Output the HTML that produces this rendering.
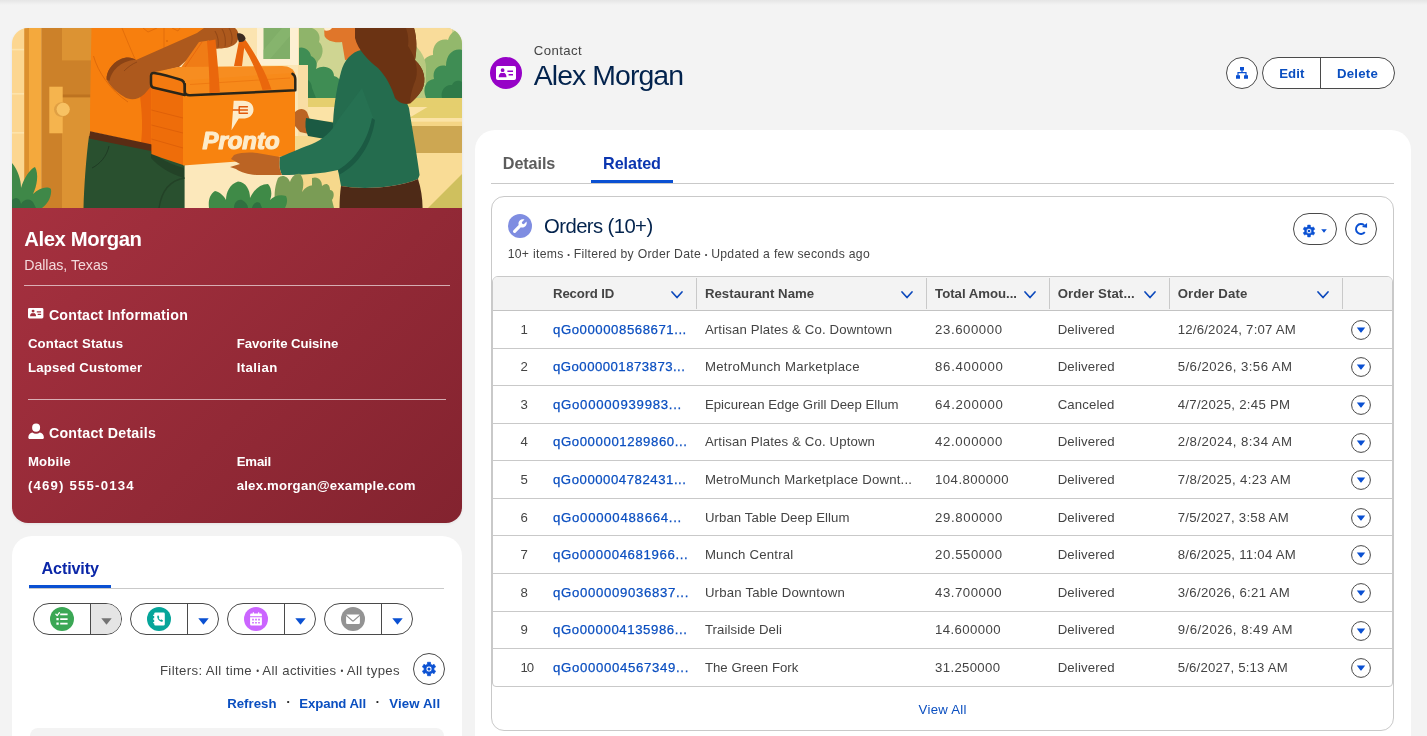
<!DOCTYPE html>
<html lang="en"><head><meta charset="utf-8"><title>Alex Morgan | Contact</title>
<style>
html,body{margin:0;padding:0}
html{background:#f3f3f3}
body{width:1427px;height:736px;overflow:hidden;background:#f3f3f3;font-family:"Liberation Sans",sans-serif;position:relative;color:#444;will-change:transform}
.a{position:absolute}
.t{position:absolute;white-space:nowrap;line-height:1;color:#444;font-weight:400;text-decoration:none}
svg{position:absolute;overflow:visible}
.illu{overflow:hidden}
.card{position:absolute;background:#fff}
.btn{position:absolute;box-sizing:border-box;border:1px solid #4a4a4a;background:#fff}
.hr{position:absolute;height:1px}
.illu{left:0;top:0}
</style></head><body>
<div class="a" style="left:0;top:0;width:1427px;height:4.5px;background:linear-gradient(#e5e5e5,#f3f3f3)"></div>
<div class="a" style="left:12px;top:28px;width:450px;height:495px;border-radius:16px;overflow:hidden;box-shadow:0 1px 3px rgba(0,0,0,.07)">
<div class="a" style="left:0;top:178px;width:450px;height:318px;background:linear-gradient(135deg,#ae3443 0%,#83232f 100%) 0 -178px/450px 495px no-repeat"></div>
<svg class="illu" viewBox="0 0 450 180" width="450" height="180">
<g>
<!-- base -->
<rect width="450" height="180" fill="#fce8bb"/>
<!-- garden right -->
<rect x="286" y="0" width="164" height="72" fill="#cfd592"/>
<rect x="286" y="69.5" width="164" height="10" fill="#e5cf6e"/>
<rect x="286" y="79" width="164" height="14.5" fill="#fbe3a6"/>
<rect x="286" y="93.5" width="164" height="5" fill="#f5d585"/>
<rect x="395" y="98" width="55" height="27" fill="#cda752"/>
<rect x="296" y="93.5" width="50" height="30" fill="#efd27a"/><rect x="283" y="108" width="63" height="72" fill="#f6d88c"/>
<rect x="395" y="125" width="55" height="55" fill="#f9dc96"/>
<path d="M416 180 L450 146 V180 Z" fill="#cfc05e"/>
<path d="M416 78.8 H450 V90 H397 Z" fill="#e5cf6e"/>
<rect x="400" y="0" width="40" height="42" fill="#f9dc9a"/>
<!-- light bushes -->
<path d="M286 0 H300 C306 2 309 8 307 14 C312 18 312 28 306 33 C304 40 296 42 290 40 L286 42 Z" fill="#8fb46a"/>
<path d="M404 70 C398 60 402 50 410 48 C406 38 412 28 421 27 C420 16 428 10 436 12 C438 4 446 0 450 2 V70 Z" fill="#93b86c"/>
<path d="M396 70 C392 52 394 30 402 16 C408 22 414 30 414 40 L414 70 Z" fill="#b9c980"/>
<!-- dark bushes -->
<path d="M286 20 C292 18 298 22 299 28 C304 30 306 36 304 41 C312 36 322 40 322 48 C330 50 332 60 327 66 L327 70 H286 Z" fill="#3f8d54"/>
<path d="M286 50 C294 48 300 54 300 60 L304 70 H286 Z" fill="#2f7a48"/>
<path d="M414 70 C410 60 414 52 422 51 C420 42 426 36 434 38 C434 26 442 20 450 22 V70 Z" fill="#3f8d54"/>
<path d="M430 70 C428 62 434 56 440 57 C442 52 447 52 450 54 V70 Z" fill="#2f7a48"/>
<!-- wall + window -->
<rect x="225" y="0" width="62" height="72" fill="#fbe4b0"/>
<rect x="245" y="0" width="41" height="37" fill="#fdf0d2"/>
<rect x="251.5" y="0" width="26.5" height="31" fill="#80ae68"/>
<path d="M251.5 22 L270 0 H278 V8 L258 31 H251.5 Z" fill="#8ab872" opacity=".6"/>
<rect x="276" y="37" width="20" height="71" fill="#fbe6b6"/><rect x="286" y="37" width="10" height="71" fill="#f9dea4"/>
<!-- left wall -->
<rect x="0" y="0" width="12.4" height="180" fill="#fcd690"/>
<rect x="0" y="20.8" width="12.4" height="1.6" fill="#fde3ab"/>
<rect x="0" y="65" width="12.4" height="1.6" fill="#fde3ab"/>
<rect x="0" y="104" width="12.4" height="1.6" fill="#fde3ab"/>
<!-- door -->
<rect x="12.2" y="0" width="5" height="180" fill="#dc902e"/>
<rect x="17" y="0" width="12.5" height="180" fill="#f4a93d"/>
<rect x="29.3" y="0" width="52" height="180" fill="#cc8129"/>
<rect x="50" y="0" width="30" height="32.4" fill="#dc9333"/>
<rect x="50" y="66.5" width="30" height="3" fill="#bd7320"/>
<rect x="50" y="69.5" width="30" height="111" fill="#dc9333"/>
<rect x="37.3" y="58.7" width="13.4" height="46.6" fill="#f5b44e"/>
<circle cx="49.3" cy="81.6" r="7.3" fill="#e0a044"/>
<circle cx="51.2" cy="81.3" r="6.6" fill="#f8c263"/>

<!-- ===== man ===== -->
<!-- pants -->
<path d="M77 108 L140 121 L152 128 L172.6 136 V180 H71.5 C72 160 74 130 77 108 Z" fill="#29502f"/>
<path d="M139 123 C146 130 158 136 172 140 V150 C158 146 146 138 139 130 Z" fill="#234227"/>
<path d="M97 118 C95 128 88 136 80 140" stroke="#1f3b24" stroke-width="1" fill="none"/>
<path d="M172.6 150 C160 152 150 160 147 180" stroke="#234227" stroke-width="1.4" fill="none"/>
<!-- shirt -->
<path d="M79.5 0 H198 L190 14 L162 36 L150 44 V120 L139 117 L78 103.5 C78 70 79 30 79.5 0 Z" fill="#f77f0e"/>
<path d="M128 68 L139.4 58 V117 L129 115 C131 100 130 84 128 68 Z" fill="#ea650a"/>
<path d="M110 0 C114 10 119 22 123 31" stroke="#de6a0a" stroke-width=".8" fill="none"/>
<path d="M81.5 28 C86 44 98 62 116 74" stroke="#de6a0a" stroke-width="1" fill="none"/>
<path d="M152 0 V20" stroke="#de6a0a" stroke-width=".8" fill="none"/>
<path d="M131 0 L136 4 L145 0 M160 0 L166 3 L168 0" stroke="#de6a0a" stroke-width=".8" fill="none"/>
<circle cx="155" cy="13" r="1" fill="#de6a0a"/>
<!-- belt -->
<path d="M78.2 103.2 L139 116.2 L150 119 V127 L139 123 L77 110.6 Z" fill="#5a2c14"/>
<!-- arm -->
<path d="M94.6 51.5 C94 44 100 35 108 31.5 C114 28.6 120 29 124 32 L185 5 L192 0 H223 C227 3 227.5 9 225 14 C222 18.5 214 20.5 207 20.5 C202 21.5 197 20 194.5 16 L185 23 L167 39 L141 45.5 L139.8 57.5 L132.5 66 C126 72 118 73 111.7 68.5 C104 64 98 58 94.6 51.5 Z" fill="#ad591d"/>
<path d="M94.6 51.5 C94 44 100 35 108 31.5 C114 28.6 120 29 124 32 C112 32 100 40 97.5 53 Z" fill="#8a4315"/>
<path d="M112 43 C116 39 120 36 125 34" stroke="#8a4315" stroke-width=".8" fill="none"/>
<path d="M203 3 C206 8 207 14 206 19.5 M210 1 C213 6 214 12 213 18.5 M217 0 C220 5 221 11 219 16.5" stroke="#8a4315" stroke-width=".8" fill="none"/>
<!-- ===== bag ===== -->
<!-- back straps -->
<path d="M187 14 L197 12.5 L199 39 L169 39.5 Z" fill="#f07c16"/><path d="M190 14 L173 39" stroke="#e8690e" stroke-width="1" fill="none"/>
<path d="M227 13 L233 13 L230 38 L222 38 Z" fill="#e8640c"/>
<!-- lid top -->
<path d="M141 44.5 L166 39 L270 38 C277 38 282 41 283 46 L173 54 Z" fill="#f78d20"/>
<!-- side face -->
<path d="M139.4 58 L171 66 V137 L150 130 L139.4 126 Z" fill="#ee6d0a"/>
<path d="M139.4 82 L171 90 M139.4 97 L171 105 M139.4 111 L171 120" stroke="#dd5f08" stroke-width=".9" fill="none"/>
<!-- front face -->
<path d="M171 64 L283 60 V127 L232 133 L171 137.5 Z" fill="#f8830f"/>
<!-- lid side -->
<path d="M142 45 C148 46 160 49 168 51.5 C171.5 52.5 172.8 55 172.8 58 V67 L141 59.5 C139 59 139 57 139 55 V48 C139 46 140 44.7 142 45 Z" fill="#f47a10" stroke="#2b2619" stroke-width="2.5" stroke-linejoin="round"/>
<!-- lid front -->
<path d="M172.8 56 C172.8 53 174 52.2 177 52 L277 45.2 C281 45 283.2 47 283.3 51 V62.3 L178 67.3 C174.5 67.4 172.8 66 172.8 63 Z" fill="#f78a1a"/>
<path d="M172.8 56 V63 C172.8 66 174.5 67.4 178 67.3 L283.3 62.3 V51 C283.2 48 282 46.5 280.5 45.8" stroke="#2b2619" stroke-width="2.5" fill="none" stroke-linejoin="round" stroke-linecap="round"/>
<path d="M178 56.5 L278 50" stroke="#ee7a12" stroke-width="1" fill="none"/>
<!-- front straps -->
<path d="M195 13 L203.5 11.5 C205 30 207 48 207.8 64.5 L197.5 65 C197.5 48 196.5 30 195 13 Z" fill="#ea670c"/>
<path d="M233.5 12 C242 24 254 44 259.5 61.5 L250.5 62 C246 46 238 28 229 15 Z" fill="#ea670c"/>
<!-- grip -->
<path d="M225 5.5 C229 4.5 233 7 233.5 10.5 C233.5 13 231 14.5 227 14 C225.5 11 225 8 225 5.5 Z" fill="#3b2a20"/>
<!-- logo -->
<g fill="#fdeccb" transform="translate(230.5 82) scale(1.1) translate(-231 -82)">
<path d="M223 73.5 H231.5 C237.5 73.5 241 77 241 81.5 C241 86.5 237 89.8 231 89.8 H227.6 L221 100.5 Z"/>
</g>
<g stroke="#e25a0c" stroke-width="1.25" fill="none" stroke-linecap="round" transform="translate(230.5 82) scale(1.1) translate(-231 -82)"><path d="M222.5 82 H228 M228 79 H235.5 M228 82 H235.5 M228 85 H235.5 M228 79 V85"/></g>
<text x="190.5" y="120.8" font-family="'Liberation Sans',sans-serif" font-weight="700" font-style="italic" font-size="23" fill="#fdeccb" stroke="#fdeccb" stroke-width="1.2" stroke-linejoin="round" textLength="77" lengthAdjust="spacingAndGlyphs">Pronto</text>
<!-- ===== woman ===== -->
<!-- far arm (shadow) + hand on bag -->
<path d="M283 84 C287 80 292 80 295 84 L298 92 L297 106 L288 104 L283 98 Z" fill="#bb6424"/>
<path d="M294 90 L330 96 V114 L296 108 C293 102 293 96 294 90 Z" fill="#1b5a43"/>
<!-- neck/face -->
<path d="M312 0 H345 L352 30 L333 32 L330 14 C322 15 315 13 312.5 8 Z" fill="#e0762a"/>
<path d="M312 0 H320 C319 2 316 3 312.5 2.5 Z" fill="#fdf0d2"/>
<!-- sweater body -->
<path d="M349 22 C340 24 332 32 329 44 C324 62 321 84 321 100 L326 142 L329 158 C350 162 385 160 406 151 L407.6 147 C404 120 400 100 397 80 L380 40 Z" fill="#246c4e"/>
<!-- skirt -->
<path d="M329 158 C350 162 385 160 406 151 C409 160 410.5 170 410.6 180 H327.5 C327.6 172 328 165 329 158 Z" fill="#4e2a17"/>
<!-- near arm -->
<path d="M268 129 C280 124 292 119 300 116 C310 112 320 104 326 92 L350 60 L362 92 C358 112 346 132 326 142 C310 146 288 147 270 147 C267 141 267 134 268 129 Z" fill="#267152"/>
<path d="M360 90 C356 110 346 130 326 142 L327.5 146.5 C348 136 360 114 363 92 Z" fill="#1b5a43"/>
<!-- near hand -->
<path d="M222 127 C230 124 240 124 248 125.5 L268 129 C267 135 267 141 270 147 L250 147 C240 147.5 230 145 224 141 L218 139 L228 136 L219 131 Z" fill="#bb6424"/>
<!-- hair -->
<path d="M343 0 H402 C405 10 405 22 403 32 C412 40 415 52 410 62 C406 68 402 72 398 75.5 C392 77 386 74 383 70 C380 60 374 48 366 40 C356 32 346 22 343 10 Z" fill="#6b3313"/>
<path d="M396 18 C404 30 408 44 402 56 C400 62 398 68 398 75.5 C402 72 406 68 410 62 C415 52 412 40 403 32 C405 22 405 10 402 0 H394 C396 6 397 12 396 18 Z" fill="#7c3f19"/>
<!-- bushes bottom -->
<path d="M263.7 180 C262 170 262 160 266 150 C270 146 276 148 278 154 C280 148 284 145 288 146 C292 150 292 158 290 164 C294 158 300 156 304 158 C308 164 306 174 300 180 Z" fill="#7a9c55"/>
<path d="M300 180 V150 C306 148 310 152 310 158 C314 154 318 156 318 162 C322 162 323 168 320 172 L322 180 Z" fill="#7a9c55"/>
<path d="M197 180 C196 172 198 166 203 163 C208 164 212 168 214 172 C214 164 218 156 226 153.5 C234 154 238 162 238 170 C242 162 248 156 256 156 C260 160 260 168 258 172 C262 168 268 166 274 168 C276 172 275 176 273 180 Z" fill="#3f8a47"/>
<path d="M222 180 C222 174 226 171 230 172 C234 174 236 177 236 180 Z M240 180 C241 175 245 173 248 175 L250 180 Z" fill="#2f7040"/>
<!-- bush bottom-left -->
<path d="M0 135 C6 142 9 152 9 160 C12 150 18 141 23 139 C27 146 25 158 21 166 C27 160 35 158 39 161 C40 168 36 176 30 180 H0 Z" fill="#3f8848"/>
<path d="M0 172 C4 168 8 170 9 176 C12 170 20 170 22 176 L24 180 H0 Z" fill="#2f7040"/>
</g>
</svg>
</div>
<div class="t" style="left:24.2px;top:229px;font-size:20.3px;font-weight:700;color:#fff;letter-spacing:-0.39px;">Alex Morgan</div>
<div class="t" style="left:24.2px;top:258px;font-size:14.2px;color:#f3d9dc;letter-spacing:-0.04px;">Dallas, Texas</div>
<div class="hr" style="left:24px;top:285px;width:426px;background:rgba(255,255,255,.62)"></div>
<svg style="left:28.2px;top:307.8px" width="15.4" height="10.4" viewBox="6 9.1 20 13.9" preserveAspectRatio="none"><path fill="#fff" fill-rule="evenodd" d="M7.8 9.1H24.2A1.8 1.8 0 0 1 26 10.9V21.2A1.8 1.8 0 0 1 24.2 23H7.8A1.8 1.8 0 0 1 6 21.2V10.9A1.8 1.8 0 0 1 7.8 9.1ZM12.6 11.3A1.9 1.9 0 1 0 12.6 15.1A1.9 1.9 0 1 0 12.6 11.3ZM8.7 20.2H16.5C16.5 17.6 15.3 16.1 14 15.7C13.2 16.2 12 16.2 11.2 15.7C9.9 16.1 8.7 17.6 8.7 20.2ZM17.4 13.5V15.1H23V13.5ZM18.6 16.9V18.5H23V16.9Z"/></svg>
<div class="t" style="left:48.9px;top:308px;font-size:14.2px;font-weight:700;color:#fff;letter-spacing:0.23px;">Contact Information</div>
<div class="t" style="left:27.9px;top:337px;font-size:13.2px;font-weight:700;color:#fff;letter-spacing:0.17px;">Contact Status</div>
<div class="t" style="left:236.7px;top:337px;font-size:13.2px;font-weight:700;color:#fff;letter-spacing:-0.07px;">Favorite Cuisine</div>
<div class="t" style="left:27.9px;top:361px;font-size:13.2px;font-weight:700;color:#fff;letter-spacing:0.21px;">Lapsed Customer</div>
<div class="t" style="left:236.7px;top:361px;font-size:13.2px;font-weight:700;color:#fff;letter-spacing:0.40px;">Italian</div>
<div class="hr" style="left:28px;top:399px;width:418px;background:rgba(255,255,255,.62)"></div>
<svg style="left:28px;top:423px" width="16" height="16" viewBox="0 0 16 16"><path fill="#fff" d="M8.1.6A4 4.1 0 1 0 8.1 8.8A4 4.1 0 1 0 8.1.6ZM.3 14.4C.3 11.6 2.3 9.9 4.4 9.6C5.4 10.4 6.7 10.8 8.1 10.8C9.5 10.8 10.8 10.4 11.8 9.6C13.9 9.9 15.9 11.6 15.9 14.4C15.9 15.3 15.3 15.9 14.6 15.9H1.6C.9 15.9.3 15.3.3 14.4Z"/></svg>
<div class="t" style="left:48.9px;top:426px;font-size:14.2px;font-weight:700;color:#fff;letter-spacing:0.26px;">Contact Details</div>
<div class="t" style="left:27.9px;top:455px;font-size:13.2px;font-weight:700;color:#fff;letter-spacing:0.21px;">Mobile</div>
<div class="t" style="left:236.7px;top:455px;font-size:13.2px;font-weight:700;color:#fff;letter-spacing:-0.15px;">Email</div>
<div class="t" style="left:27.9px;top:479px;font-size:13.2px;font-weight:700;color:#fff;letter-spacing:1.19px;">(469) 555-0134</div>
<div class="t" style="left:236.7px;top:479px;font-size:13.2px;font-weight:700;color:#fff;letter-spacing:0.21px;">alex.morgan@example.com</div>
<div class="card" style="left:12px;top:536px;width:450px;height:220px;border-radius:20px"></div>
<div class="t" style="left:41.5px;top:560px;font-size:16.2px;font-weight:700;color:#0b27a8;letter-spacing:-0.15px;">Activity</div>
<div class="hr" style="left:29px;top:588px;width:415px;background:#c9c9c9"></div>
<div class="a" style="left:29px;top:585px;width:82px;height:3.4px;background:#0a50d2"></div>
<div class="btn" style="left:33px;top:603px;width:89px;height:32px;border-radius:16px;overflow:hidden"><div class="a" style="left:55.8px;top:0;width:1px;height:30px;background:#4a4a4a"></div><div class="a" style="left:56.8px;top:0;width:32px;height:30px;background:#e5e5e5"></div></div>
<svg style="left:50px;top:607px" width="24" height="24" viewBox="0 0 24 24"><circle cx="12" cy="12" r="12" fill="#3ba755"/><path fill="#fff" d="M10.2 6.6H17.6V8.3H10.2ZM10.2 11.2H17.6V12.9H10.2ZM10.2 15.7H17.6V17.4H10.2ZM6.4 10.9H8.7V13.2H6.4ZM6.4 15.4H8.7V17.7H6.4Z"/><path d="M5.9 7.3L7.2 8.6L9.4 5.7" stroke="#fff" stroke-width="1.3" fill="none" stroke-linecap="round" stroke-linejoin="round"/></svg>
<svg style="left:100.5px;top:617.8px" width="11" height="7" viewBox="0 0 11 7"><path fill="#747474" d="M.3.3H10.7L5.9 6.3Q5.5 6.7 5.1 6.3Z"/></svg>
<div class="btn" style="left:130px;top:603px;width:89px;height:32px;border-radius:16px;overflow:hidden"><div class="a" style="left:55.8px;top:0;width:1px;height:30px;background:#4a4a4a"></div></div>
<svg style="left:147px;top:607px" width="24" height="24" viewBox="0 0 24 24"><circle cx="12" cy="12" r="12" fill="#06a59a"/><path fill="#fff" fill-rule="evenodd" d="M8.6 5.4H16.4A1.4 1.4 0 0 1 17.8 6.8V17.2A1.4 1.4 0 0 1 16.4 18.6H8.6A1.4 1.4 0 0 1 7.2 17.2V16.3H6.2V14.9H7.2V12.7H6.2V11.3H7.2V9.1H6.2V7.7H7.2V6.8A1.4 1.4 0 0 1 8.6 5.4ZM10.9 8.6C10.4 8.9 10.1 9.4 10.2 10C10.5 12.2 12.2 14.2 14.3 14.8C14.9 15 15.4 14.7 15.7 14.3L15.9 13.9C16 13.7 15.9 13.4 15.7 13.3L14.5 12.6C14.3 12.5 14.1 12.5 13.9 12.7L13.5 13.1C12.7 12.7 12 11.9 11.7 11.1L12.1 10.7C12.3 10.5 12.3 10.3 12.2 10.1L11.6 8.8C11.5 8.6 11.2 8.5 10.9 8.6Z"/></svg>
<svg style="left:197.5px;top:617.8px" width="11" height="7" viewBox="0 0 11 7"><path fill="#0a50d2" d="M.3.3H10.7L5.9 6.3Q5.5 6.7 5.1 6.3Z"/></svg>
<div class="btn" style="left:227px;top:603px;width:89px;height:32px;border-radius:16px;overflow:hidden"><div class="a" style="left:55.8px;top:0;width:1px;height:30px;background:#4a4a4a"></div></div>
<svg style="left:244px;top:607px" width="24" height="24" viewBox="0 0 24 24"><circle cx="12" cy="12" r="12" fill="#cb65ff"/><path fill="#fff" fill-rule="evenodd" d="M8.8 5.3H9.9V6.6H14.1V5.3H15.2V6.6H16.6A1.3 1.3 0 0 1 17.9 7.9V9.3H6.1V7.9A1.3 1.3 0 0 1 7.4 6.6H8.8ZM6.1 10.3H17.9V17.2A1.3 1.3 0 0 1 16.6 18.5H7.4A1.3 1.3 0 0 1 6.1 17.2ZM8.2 11.8V13.4H9.8V11.8ZM11.2 11.8V13.4H12.8V11.8ZM14.2 11.8V13.4H15.8V11.8ZM8.2 14.9V16.5H9.8V14.9ZM11.2 14.9V16.5H12.8V14.9ZM14.2 14.9V16.5H15.8V14.9Z"/></svg>
<svg style="left:294.5px;top:617.8px" width="11" height="7" viewBox="0 0 11 7"><path fill="#0a50d2" d="M.3.3H10.7L5.9 6.3Q5.5 6.7 5.1 6.3Z"/></svg>
<div class="btn" style="left:324px;top:603px;width:89px;height:32px;border-radius:16px;overflow:hidden"><div class="a" style="left:55.8px;top:0;width:1px;height:30px;background:#4a4a4a"></div></div>
<svg style="left:341px;top:607px" width="24" height="24" viewBox="0 0 24 24"><circle cx="12" cy="12" r="12" fill="#939393"/><path fill="#fff" d="M6 7.4H18A.9.9 0 0 1 18.6 7.7L12.5 13.1Q12 13.5 11.5 13.1L5.4 7.7A.9.9 0 0 1 6 7.4ZM5.1 9.1L11 14.3Q12 15.1 13 14.3L18.9 9.1V15.8A1.2 1.2 0 0 1 17.7 17H6.3A1.2 1.2 0 0 1 5.1 15.8Z"/></svg>
<svg style="left:391.5px;top:617.8px" width="11" height="7" viewBox="0 0 11 7"><path fill="#0a50d2" d="M.3.3H10.7L5.9 6.3Q5.5 6.7 5.1 6.3Z"/></svg>
<div class="t" style="left:159.9px;top:664px;font-size:13.2px;letter-spacing:0.38px;">Filters: All time <span style="font-size:.62em;vertical-align:.12em;letter-spacing:0">•</span> All activities <span style="font-size:.62em;vertical-align:.12em;letter-spacing:0">•</span> All types</div>
<div class="btn" style="left:413px;top:653px;width:32px;height:32px;border-radius:16px"></div>
<svg style="left:421px;top:661px" width="16" height="16" viewBox="0 0 16 16"><path fill="#0a50d2" fill-rule="evenodd" stroke="#0a50d2" stroke-width=".7" stroke-linejoin="round" d="M6.49 1.27L9.51 1.27L9.59 3.26L11.31 4.25L13.08 3.33L14.58 5.94L12.90 7.01L12.90 8.99L14.58 10.06L13.08 12.67L11.31 11.75L9.59 12.74L9.51 14.73L6.49 14.73L6.41 12.74L4.69 11.75L2.92 12.67L1.42 10.06L3.10 8.99L3.10 7.01L1.42 5.94L2.92 3.33L4.69 4.25L6.41 3.26ZM8 5A3 3 0 1 0 8 11A3 3 0 1 0 8 5Z"/><circle cx="8" cy="8" r="1.55" fill="#0a50d2"/></svg>
<div class="t" style="left:227.2px;top:697px;font-size:13.2px;font-weight:700;color:#0b4fc0;letter-spacing:0.03px;">Refresh</div>
<div class="t" style="left:286.7px;top:698px;font-size:8.1px;color:#222;">•</div>
<div class="t" style="left:299.3px;top:697px;font-size:13.2px;font-weight:700;color:#0b4fc0;letter-spacing:-0.10px;">Expand All</div>
<div class="t" style="left:376.1px;top:698px;font-size:8.1px;color:#222;">•</div>
<div class="t" style="left:389.2px;top:697px;font-size:13.2px;font-weight:700;color:#0b4fc0;letter-spacing:0.15px;">View All</div>
<div class="a" style="left:30px;top:728px;width:414px;height:20px;border-radius:8px;background:#f3f3f3"></div>
<svg style="left:490px;top:57px" width="32" height="32" viewBox="0 0 32 32"><circle cx="16" cy="16" r="16" fill="#9602c7"/><path fill="#fff" fill-rule="evenodd" d="M7.8 9.1H24.2A1.8 1.8 0 0 1 26 10.9V21.2A1.8 1.8 0 0 1 24.2 23H7.8A1.8 1.8 0 0 1 6 21.2V10.9A1.8 1.8 0 0 1 7.8 9.1ZM12.6 11.3A1.9 1.9 0 1 0 12.6 15.1A1.9 1.9 0 1 0 12.6 11.3ZM8.7 20.2H16.5C16.5 17.6 15.3 16.1 14 15.7C13.2 16.2 12 16.2 11.2 15.7C9.9 16.1 8.7 17.6 8.7 20.2ZM17.4 13.5V15.1H23V13.5ZM18.6 16.9V18.5H23V16.9Z"/></svg>
<div class="t" style="left:533.8px;top:44px;font-size:13.2px;letter-spacing:0.42px;">Contact</div>
<h1 class="t" style="left:533.8px;top:61px;font-size:28.4px;color:#03234d;letter-spacing:-0.92px;margin:0;">Alex Morgan</h1>
<div class="btn" style="left:1226px;top:57px;width:32px;height:32px;border-radius:16px"></div>
<svg style="left:1236px;top:67px" width="12" height="12" viewBox="0 0 12 12"><path fill="#0a50d2" d="M4 0H8V3.4H6.6V5.1H10.6V8.3H12V11.8H8V8.3H9.4V6.3H2.6V8.3H4V11.8H0V8.3H1.4V5.1H5.4V3.4H4Z"/></svg>
<div class="btn" style="left:1262px;top:57px;width:133px;height:32px;border-radius:16px"><div class="a" style="left:57px;top:0;width:1px;height:30px;background:#4a4a4a"></div></div>
<div class="t" style="left:1279.2px;top:67px;font-size:13.2px;font-weight:700;color:#0b4fc0;letter-spacing:0.06px;">Edit</div>
<div class="t" style="left:1337.0px;top:67px;font-size:13.2px;font-weight:700;color:#0b4fc0;letter-spacing:0.24px;">Delete</div>
<div class="card" style="left:475px;top:130px;width:936px;height:640px;border-radius:20px"></div>
<div class="t" style="left:502.8px;top:155px;font-size:16.2px;font-weight:700;color:#5c5c5c;letter-spacing:-0.10px;">Details</div>
<div class="t" style="left:603.1px;top:155px;font-size:16.2px;font-weight:700;color:#0b36b0;letter-spacing:-0.10px;">Related</div>
<div class="hr" style="left:491px;top:183px;width:903px;background:#c9c9c9"></div>
<div class="a" style="left:591px;top:180px;width:82px;height:3.4px;background:#0a50d2"></div>
<div class="a" style="left:491px;top:196px;width:903px;height:535px;box-sizing:border-box;border:1px solid #c9c9c9;border-radius:13px"></div>
<svg style="left:507.9px;top:214.1px" width="24" height="24" viewBox="0 0 24 24"><circle cx="12" cy="12" r="12" fill="#7f8de1"/><path fill="#fff" transform="translate(12 12) scale(1.12) translate(-12.1 -11.9)" d="M17.9 7.9C18.4 9.4 18 11 16.9 12.1C15.8 13.2 14.300000000000001 13.5 12.9 13.100000000000001L8.3 17.7C7.7 18.3 6.8 18.3 6.3 17.7C5.7 17.2 5.7 16.3 6.3 15.7L10.9 11.100000000000001C10.5 9.700000000000001 10.8 8.200000000000001 11.9 7.100000000000001C13 6 14.600000000000001 5.6000000000000005 16.1 6.1000000000000005L13.7 8.5L14.1 9.9L15.5 10.3Z"/></svg>
<h2 class="t" style="left:544.1px;top:216px;font-size:20.3px;color:#03234d;letter-spacing:-0.59px;margin:0;">Orders (10+)</h2>
<div class="t" style="left:507.7px;top:248px;font-size:12.2px;letter-spacing:0.31px;">10+ items <span style="font-size:.62em;vertical-align:.12em;letter-spacing:0">•</span> Filtered by Order Date <span style="font-size:.62em;vertical-align:.12em;letter-spacing:0">•</span> Updated a few seconds ago</div>
<div class="btn" style="left:1293px;top:213px;width:44px;height:32px;border-radius:16px"></div>
<svg style="left:1302.1px;top:223.9px" width="14" height="14" viewBox="0 0 16 16"><path fill="#0a50d2" fill-rule="evenodd" stroke="#0a50d2" stroke-width=".7" stroke-linejoin="round" d="M6.49 1.27L9.51 1.27L9.59 3.26L11.31 4.25L13.08 3.33L14.58 5.94L12.90 7.01L12.90 8.99L14.58 10.06L13.08 12.67L11.31 11.75L9.59 12.74L9.51 14.73L6.49 14.73L6.41 12.74L4.69 11.75L2.92 12.67L1.42 10.06L3.10 8.99L3.10 7.01L1.42 5.94L2.92 3.33L4.69 4.25L6.41 3.26ZM8 5A3 3 0 1 0 8 11A3 3 0 1 0 8 5Z"/><circle cx="8" cy="8" r="1.55" fill="#0a50d2"/></svg>
<svg style="left:1320.8px;top:229.1px" width="6" height="4" viewBox="0 0 6 4"><path fill="#0a50d2" d="M.2.3H5.8L3 3.7Z"/></svg>
<div class="btn" style="left:1345px;top:213px;width:32px;height:32px;border-radius:16px"></div>
<svg style="left:1353.8px;top:222.4px" width="14" height="14" viewBox="-7 -7 14 14"><path d="M3.2 -3.8A5 5 0 1 0 3.8 3.2" stroke="#0a50d2" stroke-width="1.9" fill="none"/><path fill="#0a50d2" d="M.9 -1.9L6.05 -6.05V-1.2Z"/></svg>
<div class="a" style="left:492px;top:276px;width:901px;height:411px;box-sizing:border-box;border:1px solid #c9c9c9;border-radius:6px 6px 4px 4px;overflow:hidden;background:#fff"><div class="a" style="left:0;top:0;width:100%;height:33px;background:#f3f3f3;border-bottom:1.6px solid #c3c3c3"></div><div class="a" style="left:203.0px;top:1px;width:1px;height:31px;background:#c9c9c9"></div><div class="a" style="left:433.0px;top:1px;width:1px;height:31px;background:#c9c9c9"></div><div class="a" style="left:556.1px;top:1px;width:1px;height:31px;background:#c9c9c9"></div><div class="a" style="left:676.0px;top:1px;width:1px;height:31px;background:#c9c9c9"></div><div class="a" style="left:849.1px;top:1px;width:1px;height:31px;background:#c9c9c9"></div><div class="a" style="left:0;top:71.0px;width:100%;height:1px;background:#c9c9c9"></div><div class="a" style="left:0;top:108.0px;width:100%;height:1px;background:#c9c9c9"></div><div class="a" style="left:0;top:146.0px;width:100%;height:1px;background:#c9c9c9"></div><div class="a" style="left:0;top:183.0px;width:100%;height:1px;background:#c9c9c9"></div><div class="a" style="left:0;top:221.0px;width:100%;height:1px;background:#c9c9c9"></div><div class="a" style="left:0;top:258.0px;width:100%;height:1px;background:#c9c9c9"></div><div class="a" style="left:0;top:296.0px;width:100%;height:1px;background:#c9c9c9"></div><div class="a" style="left:0;top:334.0px;width:100%;height:1px;background:#c9c9c9"></div><div class="a" style="left:0;top:371.0px;width:100%;height:1px;background:#c9c9c9"></div></div>
<div class="t" style="left:553.0px;top:287px;font-size:13.2px;font-weight:700;letter-spacing:-0.12px;">Record ID</div>
<svg style="left:671px;top:290.6px" width="12" height="8" viewBox="0 0 12 8"><path d="M1 1L6 6.5L11 1" stroke="#0b48bc" stroke-width="1.7" fill="none" stroke-linecap="round" stroke-linejoin="round"/></svg>
<div class="t" style="left:704.9px;top:287px;font-size:13.2px;font-weight:700;letter-spacing:0.06px;">Restaurant Name</div>
<svg style="left:901.2px;top:290.6px" width="12" height="8" viewBox="0 0 12 8"><path d="M1 1L6 6.5L11 1" stroke="#0b48bc" stroke-width="1.7" fill="none" stroke-linecap="round" stroke-linejoin="round"/></svg>
<div class="t" style="left:935.1px;top:287px;font-size:13.2px;font-weight:700;letter-spacing:-0.01px;">Total Amou...</div>
<svg style="left:1024px;top:290.6px" width="12" height="8" viewBox="0 0 12 8"><path d="M1 1L6 6.5L11 1" stroke="#0b48bc" stroke-width="1.7" fill="none" stroke-linecap="round" stroke-linejoin="round"/></svg>
<div class="t" style="left:1057.7px;top:287px;font-size:13.2px;font-weight:700;letter-spacing:0.12px;">Order Stat...</div>
<svg style="left:1144px;top:290.6px" width="12" height="8" viewBox="0 0 12 8"><path d="M1 1L6 6.5L11 1" stroke="#0b48bc" stroke-width="1.7" fill="none" stroke-linecap="round" stroke-linejoin="round"/></svg>
<div class="t" style="left:1177.7px;top:287px;font-size:13.2px;font-weight:700;letter-spacing:0.16px;">Order Date</div>
<svg style="left:1317px;top:290.6px" width="12" height="8" viewBox="0 0 12 8"><path d="M1 1L6 6.5L11 1" stroke="#0b48bc" stroke-width="1.7" fill="none" stroke-linecap="round" stroke-linejoin="round"/></svg>
<div class="t" style="left:520.6px;top:323px;font-size:13.2px;">1</div>
<a class="t" style="left:553.0px;top:323px;font-size:13.2px;color:#0b4fc0;letter-spacing:0.55px;-webkit-text-stroke:.25px #0b4fc0;">qGo000008568671...</a>
<div class="t" style="left:704.9px;top:323px;font-size:13.2px;letter-spacing:0.14px;">Artisan Plates &amp; Co. Downtown</div>
<div class="t" style="left:935.1px;top:323px;font-size:13.2px;letter-spacing:0.57px;">23.600000</div>
<div class="t" style="left:1057.7px;top:323px;font-size:13.2px;letter-spacing:0.15px;">Delivered</div>
<div class="t" style="left:1177.7px;top:323px;font-size:13.2px;letter-spacing:0.22px;">12/6/2024, 7:07 AM</div>
<svg style="left:1351px;top:319.8px" width="20" height="20" viewBox="0 0 20 20"><circle cx="10" cy="10" r="9.4" fill="#fff" stroke="#484848" stroke-width="1"/><path fill="#0a50d2" d="M5.8 7.6H14.2L10.4 12.4Q10 12.8 9.6 12.4Z"/></svg>
<div class="t" style="left:520.6px;top:360px;font-size:13.2px;">2</div>
<a class="t" style="left:553.0px;top:360px;font-size:13.2px;color:#0b4fc0;letter-spacing:0.47px;-webkit-text-stroke:.25px #0b4fc0;">qGo000001873873...</a>
<div class="t" style="left:704.9px;top:360px;font-size:13.2px;letter-spacing:0.28px;">MetroMunch Marketplace</div>
<div class="t" style="left:935.1px;top:360px;font-size:13.2px;letter-spacing:0.69px;">86.400000</div>
<div class="t" style="left:1057.7px;top:360px;font-size:13.2px;letter-spacing:0.15px;">Delivered</div>
<div class="t" style="left:1177.7px;top:360px;font-size:13.2px;letter-spacing:0.46px;">5/6/2026, 3:56 AM</div>
<svg style="left:1351px;top:357.4px" width="20" height="20" viewBox="0 0 20 20"><circle cx="10" cy="10" r="9.4" fill="#fff" stroke="#484848" stroke-width="1"/><path fill="#0a50d2" d="M5.8 7.6H14.2L10.4 12.4Q10 12.8 9.6 12.4Z"/></svg>
<div class="t" style="left:520.6px;top:398px;font-size:13.2px;">3</div>
<a class="t" style="left:553.0px;top:398px;font-size:13.2px;color:#0b4fc0;letter-spacing:0.73px;-webkit-text-stroke:.25px #0b4fc0;">qGo00000939983...</a>
<div class="t" style="left:704.9px;top:398px;font-size:13.2px;letter-spacing:0.03px;">Epicurean Edge Grill Deep Ellum</div>
<div class="t" style="left:935.1px;top:398px;font-size:13.2px;letter-spacing:0.69px;">64.200000</div>
<div class="t" style="left:1057.7px;top:398px;font-size:13.2px;letter-spacing:0.13px;">Canceled</div>
<div class="t" style="left:1177.7px;top:398px;font-size:13.2px;letter-spacing:0.29px;">4/7/2025, 2:45 PM</div>
<svg style="left:1351px;top:395.0px" width="20" height="20" viewBox="0 0 20 20"><circle cx="10" cy="10" r="9.4" fill="#fff" stroke="#484848" stroke-width="1"/><path fill="#0a50d2" d="M5.8 7.6H14.2L10.4 12.4Q10 12.8 9.6 12.4Z"/></svg>
<div class="t" style="left:520.6px;top:435px;font-size:13.2px;">4</div>
<a class="t" style="left:553.0px;top:435px;font-size:13.2px;color:#0b4fc0;letter-spacing:0.59px;-webkit-text-stroke:.25px #0b4fc0;">qGo000001289860...</a>
<div class="t" style="left:704.9px;top:435px;font-size:13.2px;letter-spacing:0.14px;">Artisan Plates &amp; Co. Uptown</div>
<div class="t" style="left:935.1px;top:435px;font-size:13.2px;letter-spacing:0.61px;">42.000000</div>
<div class="t" style="left:1057.7px;top:435px;font-size:13.2px;letter-spacing:0.15px;">Delivered</div>
<div class="t" style="left:1177.7px;top:435px;font-size:13.2px;letter-spacing:0.46px;">2/8/2024, 8:34 AM</div>
<svg style="left:1351px;top:432.6px" width="20" height="20" viewBox="0 0 20 20"><circle cx="10" cy="10" r="9.4" fill="#fff" stroke="#484848" stroke-width="1"/><path fill="#0a50d2" d="M5.8 7.6H14.2L10.4 12.4Q10 12.8 9.6 12.4Z"/></svg>
<div class="t" style="left:520.6px;top:473px;font-size:13.2px;">5</div>
<a class="t" style="left:553.0px;top:473px;font-size:13.2px;color:#0b4fc0;letter-spacing:0.53px;-webkit-text-stroke:.25px #0b4fc0;">qGo000004782431...</a>
<div class="t" style="left:704.9px;top:473px;font-size:13.2px;letter-spacing:0.21px;">MetroMunch Marketplace Downt...</div>
<div class="t" style="left:935.1px;top:473px;font-size:13.2px;letter-spacing:0.43px;">104.800000</div>
<div class="t" style="left:1057.7px;top:473px;font-size:13.2px;letter-spacing:0.15px;">Delivered</div>
<div class="t" style="left:1177.7px;top:473px;font-size:13.2px;letter-spacing:0.37px;">7/8/2025, 4:23 AM</div>
<svg style="left:1351px;top:470.2px" width="20" height="20" viewBox="0 0 20 20"><circle cx="10" cy="10" r="9.4" fill="#fff" stroke="#484848" stroke-width="1"/><path fill="#0a50d2" d="M5.8 7.6H14.2L10.4 12.4Q10 12.8 9.6 12.4Z"/></svg>
<div class="t" style="left:520.6px;top:511px;font-size:13.2px;">6</div>
<a class="t" style="left:553.0px;top:511px;font-size:13.2px;color:#0b4fc0;letter-spacing:0.73px;-webkit-text-stroke:.25px #0b4fc0;">qGo00000488664...</a>
<div class="t" style="left:704.9px;top:511px;font-size:13.2px;letter-spacing:0.09px;">Urban Table Deep Ellum</div>
<div class="t" style="left:935.1px;top:511px;font-size:13.2px;letter-spacing:0.61px;">29.800000</div>
<div class="t" style="left:1057.7px;top:511px;font-size:13.2px;letter-spacing:0.15px;">Delivered</div>
<div class="t" style="left:1177.7px;top:511px;font-size:13.2px;letter-spacing:0.25px;">7/5/2027, 3:58 AM</div>
<svg style="left:1351px;top:507.8px" width="20" height="20" viewBox="0 0 20 20"><circle cx="10" cy="10" r="9.4" fill="#fff" stroke="#484848" stroke-width="1"/><path fill="#0a50d2" d="M5.8 7.6H14.2L10.4 12.4Q10 12.8 9.6 12.4Z"/></svg>
<div class="t" style="left:520.6px;top:548px;font-size:13.2px;">7</div>
<a class="t" style="left:553.0px;top:548px;font-size:13.2px;color:#0b4fc0;letter-spacing:0.63px;-webkit-text-stroke:.25px #0b4fc0;">qGo000004681966...</a>
<div class="t" style="left:704.9px;top:548px;font-size:13.2px;letter-spacing:0.22px;">Munch Central</div>
<div class="t" style="left:935.1px;top:548px;font-size:13.2px;letter-spacing:0.57px;">20.550000</div>
<div class="t" style="left:1057.7px;top:548px;font-size:13.2px;letter-spacing:0.15px;">Delivered</div>
<div class="t" style="left:1177.7px;top:548px;font-size:13.2px;letter-spacing:0.28px;">8/6/2025, 11:04 AM</div>
<svg style="left:1351px;top:545.4px" width="20" height="20" viewBox="0 0 20 20"><circle cx="10" cy="10" r="9.4" fill="#fff" stroke="#484848" stroke-width="1"/><path fill="#0a50d2" d="M5.8 7.6H14.2L10.4 12.4Q10 12.8 9.6 12.4Z"/></svg>
<div class="t" style="left:520.6px;top:586px;font-size:13.2px;">8</div>
<a class="t" style="left:553.0px;top:586px;font-size:13.2px;color:#0b4fc0;letter-spacing:0.67px;-webkit-text-stroke:.25px #0b4fc0;">qGo000009036837...</a>
<div class="t" style="left:704.9px;top:586px;font-size:13.2px;letter-spacing:0.20px;">Urban Table Downtown</div>
<div class="t" style="left:935.1px;top:586px;font-size:13.2px;letter-spacing:0.52px;">43.700000</div>
<div class="t" style="left:1057.7px;top:586px;font-size:13.2px;letter-spacing:0.15px;">Delivered</div>
<div class="t" style="left:1177.7px;top:586px;font-size:13.2px;letter-spacing:0.31px;">3/6/2026, 6:21 AM</div>
<svg style="left:1351px;top:583.0px" width="20" height="20" viewBox="0 0 20 20"><circle cx="10" cy="10" r="9.4" fill="#fff" stroke="#484848" stroke-width="1"/><path fill="#0a50d2" d="M5.8 7.6H14.2L10.4 12.4Q10 12.8 9.6 12.4Z"/></svg>
<div class="t" style="left:520.6px;top:623px;font-size:13.2px;">9</div>
<a class="t" style="left:553.0px;top:623px;font-size:13.2px;color:#0b4fc0;letter-spacing:0.59px;-webkit-text-stroke:.25px #0b4fc0;">qGo000004135986...</a>
<div class="t" style="left:704.9px;top:623px;font-size:13.2px;letter-spacing:0.10px;">Trailside Deli</div>
<div class="t" style="left:935.1px;top:623px;font-size:13.2px;letter-spacing:0.39px;">14.600000</div>
<div class="t" style="left:1057.7px;top:623px;font-size:13.2px;letter-spacing:0.15px;">Delivered</div>
<div class="t" style="left:1177.7px;top:623px;font-size:13.2px;letter-spacing:0.48px;">9/6/2026, 8:49 AM</div>
<svg style="left:1351px;top:620.6px" width="20" height="20" viewBox="0 0 20 20"><circle cx="10" cy="10" r="9.4" fill="#fff" stroke="#484848" stroke-width="1"/><path fill="#0a50d2" d="M5.8 7.6H14.2L10.4 12.4Q10 12.8 9.6 12.4Z"/></svg>
<div class="t" style="left:520.6px;top:661px;font-size:13.2px;letter-spacing:-1.17px;">10</div>
<a class="t" style="left:553.0px;top:661px;font-size:13.2px;color:#0b4fc0;letter-spacing:0.67px;-webkit-text-stroke:.25px #0b4fc0;">qGo000004567349...</a>
<div class="t" style="left:704.9px;top:661px;font-size:13.2px;letter-spacing:0.03px;">The Green Fork</div>
<div class="t" style="left:935.1px;top:661px;font-size:13.2px;letter-spacing:0.32px;">31.250000</div>
<div class="t" style="left:1057.7px;top:661px;font-size:13.2px;letter-spacing:0.15px;">Delivered</div>
<div class="t" style="left:1177.7px;top:661px;font-size:13.2px;letter-spacing:0.18px;">5/6/2027, 5:13 AM</div>
<svg style="left:1351px;top:658.2px" width="20" height="20" viewBox="0 0 20 20"><circle cx="10" cy="10" r="9.4" fill="#fff" stroke="#484848" stroke-width="1"/><path fill="#0a50d2" d="M5.8 7.6H14.2L10.4 12.4Q10 12.8 9.6 12.4Z"/></svg>
<a class="t" style="left:918.6px;top:703px;font-size:13.2px;color:#0b4fc0;letter-spacing:0.28px;">View All</a>
</body></html>
